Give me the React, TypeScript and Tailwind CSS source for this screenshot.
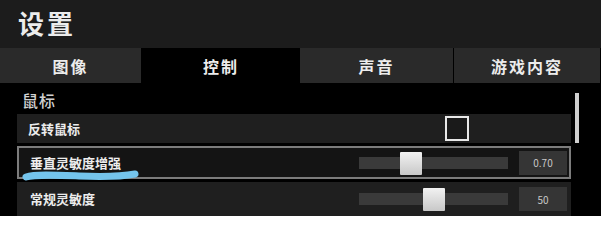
const font = { fontFamily: '"Noto Sans CJK SC", "Noto Sans", sans-serif' }

const tabs = [
  { label: '图像', w: 'w-[142px]', active: false },
  { label: '控制', w: 'w-[158px]', active: true },
  { label: '声音', w: 'w-[154px]', active: false },
  { label: '游戏内容', w: 'flex-1', active: false }
]

const Slider = ({ thumb, value }: { thumb: number; value: string }) => (
  <div className="flex items-center">
    <div className="relative w-[149px] h-[12px] bg-[#3a3a3a]">
      <div
        className="absolute top-[-5px] w-[22px] h-[23px] bg-gradient-to-b from-[#f2f2f2] to-[#c8c8c8] rounded-[1px]"
        style={{ left: thumb }}
      />
    </div>
    <div className="ml-[11px] w-[48px] h-[24px] bg-[#353535] flex items-center justify-center text-[10px] text-[#c8c8c8]">
      {value}
    </div>
  </div>
)

export default function App() {
  return (
    <div className="w-[601px] h-[216px] bg-black overflow-hidden text-[#ececec]" style={font}>
      {/* Header */}
      <div className="h-[48px] bg-[#1c1c1c] flex items-center pl-[18px] pb-[3px]">
        <h1 className="text-[26px] font-bold tracking-[3px] leading-none">设置</h1>
      </div>

      {/* Tabs */}
      <div className="flex h-[35px]">
        {tabs.map(t => (
          <div
            key={t.label}
            className={`${t.w} flex items-center justify-center text-[16px] font-bold tracking-[2px] ${
              t.active ? 'bg-black' : 'bg-[#2a2a2a] border-r border-black'
            }`}
          >
            {t.label}
          </div>
        ))}
      </div>

      {/* Content */}
      <div className="relative flex">
        <div className="w-[571px] pl-[17px]">
          <div className="h-[31px] flex items-center pl-[5px] pt-[3px] text-[16px] font-medium text-[#d0d0d0] tracking-[1px]">鼠标</div>

          <div className="flex flex-col gap-[3px]">
            <div className="h-[29px] bg-[#1f1f1f] flex items-center pl-[11px]">
              <span className="w-[417px] text-[13px] font-bold">反转鼠标</span>
              <div className="w-[24px] h-[25px] border-2 border-[#e8e8e8] bg-[#1a1a1a]" />
            </div>

            <div className="relative h-[33px] bg-[#141414] border-2 border-[#7c7c7c] flex items-center pl-[11px] pr-[2px]">
              <span className="w-[331px] text-[13px] font-bold pt-[1px]">垂直灵敏度增强</span>
              <Slider thumb={41} value="0.70" />
              <svg className="absolute left-[2px] top-[20px]" width="120" height="14" viewBox="0 0 120 14">
                <path
                  d="M5 9 C 14 6, 34 7, 58 8 S 98 9, 114 6"
                  stroke="#74c4ec"
                  strokeWidth="7"
                  strokeLinecap="round"
                  fill="none"
                />
              </svg>
            </div>

            <div className="h-[34px] bg-[#1f1f1f] flex items-center pl-[13px] pr-[4px]">
              <span className="w-[329px] text-[13px] font-bold">常规灵敏度</span>
              <Slider thumb={64} value="50" />
            </div>
          </div>
        </div>

        {/* Scrollbar */}
        <div className="ml-[4px] mt-[10px] w-[4px] h-[50px] bg-[#cfcfcf]" />
      </div>
    </div>
  )
}
